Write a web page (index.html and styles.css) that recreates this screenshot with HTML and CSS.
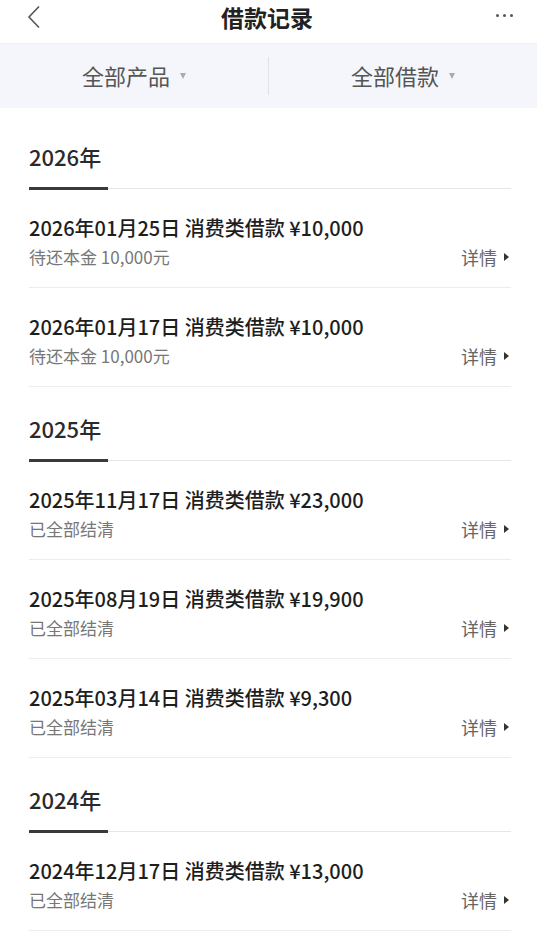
FILE: index.html
```html
<!DOCTYPE html>
<html>

<head>
  <meta charset="UTF-8">
  <title>借款记录</title>
  <link rel="stylesheet" href="styles.css">
</head>

<body>
  <div class="topbar">
    <span class="back">
      <svg width="14" height="24" viewBox="0 0 14 24"><path d="M12 1.5 L2 12 L12 22.5" fill="none" stroke="#555" stroke-width="1.6"/></svg>
    </span>
    <h1>借款记录</h1>
    <span class="more"><i></i><i></i><i></i></span>
  </div>

  <div class="filters">
    <div class="filter">全部产品 <span class="caret"></span></div>
    <div class="split"></div>
    <div class="filter">全部借款 <span class="caret"></span></div>
  </div>

  <div class="list">
    <div class="year">2026年</div>
    <div class="item">
      <div class="info">
        <div class="name">2026年01月25日 消费类借款 ¥10,000</div>
        <div class="state">待还本金 10,000元</div>
      </div>
      <div class="detail">详情 <span class="arrow"></span></div>
    </div>
    <div class="item">
      <div class="info">
        <div class="name">2026年01月17日 消费类借款 ¥10,000</div>
        <div class="state">待还本金 10,000元</div>
      </div>
      <div class="detail">详情 <span class="arrow"></span></div>
    </div>

    <div class="year">2025年</div>
    <div class="item">
      <div class="info">
        <div class="name">2025年11月17日 消费类借款 ¥23,000</div>
        <div class="state">已全部结清</div>
      </div>
      <div class="detail">详情 <span class="arrow"></span></div>
    </div>
    <div class="item">
      <div class="info">
        <div class="name">2025年08月19日 消费类借款 ¥19,900</div>
        <div class="state">已全部结清</div>
      </div>
      <div class="detail">详情 <span class="arrow"></span></div>
    </div>
    <div class="item">
      <div class="info">
        <div class="name">2025年03月14日 消费类借款 ¥9,300</div>
        <div class="state">已全部结清</div>
      </div>
      <div class="detail">详情 <span class="arrow"></span></div>
    </div>

    <div class="year">2024年</div>
    <div class="item">
      <div class="info">
        <div class="name">2024年12月17日 消费类借款 ¥13,000</div>
        <div class="state">已全部结清</div>
      </div>
      <div class="detail">详情 <span class="arrow"></span></div>
    </div>
  </div>
</body>

</html>
```

FILE: styles.css
```css
* {
  margin: 0;
  padding: 0;
  box-sizing: border-box;
}

body {
  font-family: "Noto Sans CJK SC", "Noto Sans", sans-serif;
  background: #fff;
  color: #222;
  width: 537px;
  overflow: hidden;
}

.topbar {
  height: 44px;
  display: flex;
  align-items: center;
  justify-content: space-between;
  padding: 0 24px 0 27px;
  border-bottom: 1px solid #eef0f4;
}

.back {
  display: flex;
  width: 34px;
  margin-top: -10px;
}

.topbar h1 {
  font-size: 23px;
  font-weight: 700;
  color: #222;
  margin-top: -10px;
}

.more {
  display: flex;
  gap: 4px;
  width: 40px;
  justify-content: flex-end;
  margin-top: -12px;
}

.more i {
  width: 3px;
  height: 3px;
  border-radius: 50%;
  background: #555;
}

.filters {
  height: 64px;
  background: #f4f6fb;
  display: flex;
  align-items: center;
}

.filter {
  flex: 1;
  display: flex;
  align-items: center;
  justify-content: center;
  gap: 10px;
  font-size: 22px;
  color: #555;
  margin-top: -2px;
}

.split {
  width: 1px;
  height: 38px;
  background: #dfe2ea;
}

.caret {
  width: 0;
  height: 0;
  border-left: 3.5px solid transparent;
  border-right: 3.5px solid transparent;
  border-top: 6px solid #aaa;
  margin-top: 2px;
}

.list {
  padding: 7px 26px 0 29px;
}

.year {
  position: relative;
  font-size: 22px;
  font-weight: 500;
  line-height: 30px;
  color: #2a2a2a;
  padding: 26px 0 17px;
  border-bottom: 1px solid #e6e6e6;
}

.year::after {
  content: "";
  position: absolute;
  left: 0;
  bottom: -2px;
  width: 79px;
  height: 3px;
  background: #3a3a3a;
}

.item {
  display: flex;
  align-items: flex-end;
  justify-content: space-between;
  padding: 25px 0 18px;
  border-bottom: 1px solid #ececec;
}

.name {
  font-size: 20px;
  font-weight: 500;
  line-height: 28px;
  color: #1e1e1e;
}

.state {
  font-size: 17px;
  line-height: 24px;
  margin-top: 3px;
  color: #777;
}

.detail {
  display: flex;
  align-items: center;
  gap: 7px;
  font-size: 18px;
  line-height: 24px;
  color: #666;
  margin-right: 2px;
}

.arrow {
  width: 0;
  height: 0;
  border-top: 4px solid transparent;
  border-bottom: 4px solid transparent;
  border-left: 5px solid #333;
}
```
